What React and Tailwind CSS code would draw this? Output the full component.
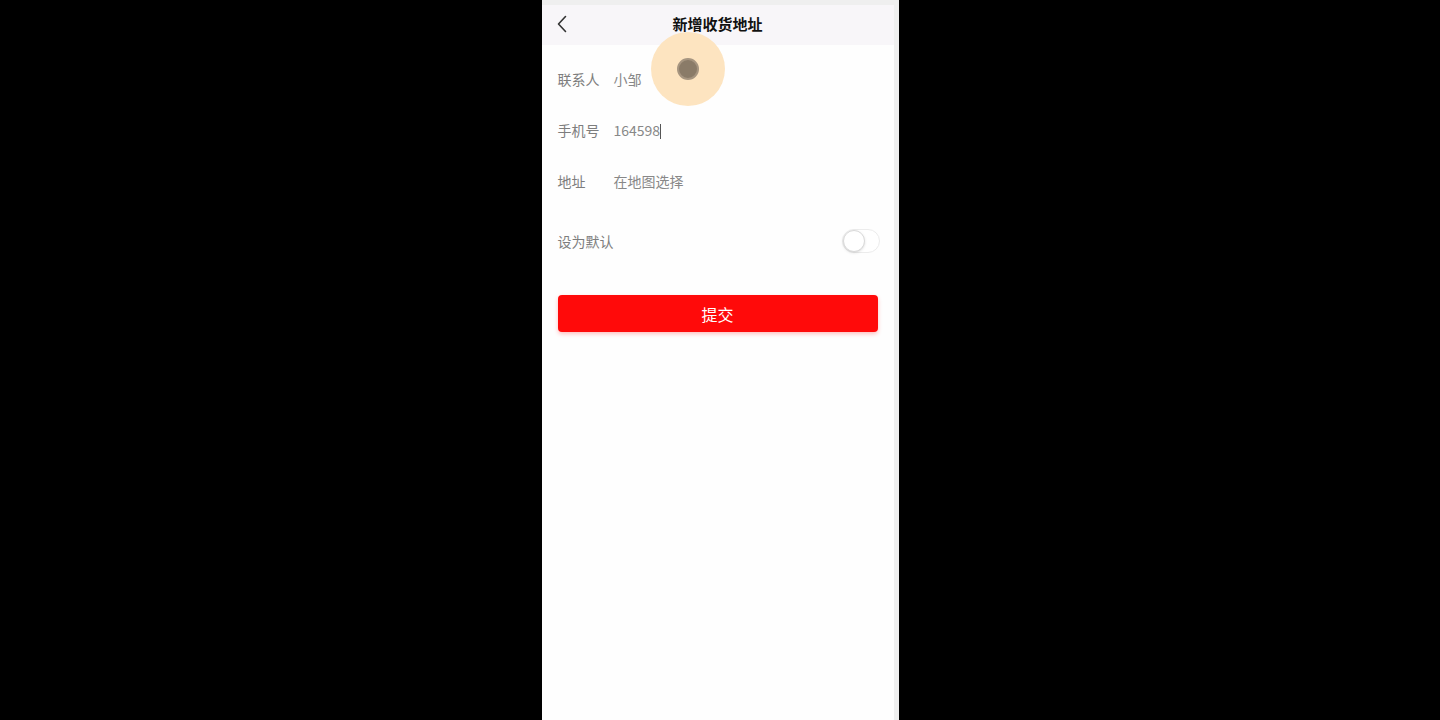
import React from 'react';

const font = { fontFamily: '"Noto Sans CJK SC", "Liberation Sans", sans-serif' };

function Row({ label, children, className = '' }) {
  return (
    <div className={`flex items-center px-4 text-[14px] ${className}`}>
      <span className="w-[56px] text-[#7d7d7d]">{label}</span>
      <div className="flex-1 text-[#888888]">{children}</div>
    </div>
  );
}

export default function App() {
  return (
    <div className="h-[720px] w-full bg-black flex justify-center" style={font}>
      <div className="relative h-full w-[357px] bg-[#efefef] pt-[5px] pr-[5px]">
        <div className="h-full bg-[#fefefe] flex flex-col">
          {/* Cabecera */}
          <div className="relative h-[40px] bg-[#f8f6f9] flex items-center justify-center">
            <svg className="absolute left-[14px] top-[10px]" width="12" height="18" viewBox="0 0 12 18" fill="none">
              <path d="M9.5 1.5 L2.5 9 L9.5 16.5" stroke="#333" strokeWidth="1.6" strokeLinecap="round" strokeLinejoin="round" />
            </svg>
            <h1 className="text-[15px] font-bold text-[#111] leading-none -mt-[3px]">新增收货地址</h1>
          </div>

          {/* Formulario */}
          <div className="flex flex-col">
            <Row label="联系人" className="h-[51px] mt-[9px]">小邹</Row>
            <Row label="手机号" className="h-[51px]">
              <span>164598</span>
              <span className="inline-block w-px h-[15px] bg-[#555] align-middle -mt-[2px]" />
            </Row>
            <Row label="地址" className="h-[51px]">在地图选择</Row>
            <div className="flex items-center justify-between px-4 h-[50px] mt-[9px] text-[14px]">
              <span className="text-[#7d7d7d]">设为默认</span>
              <div className="relative w-[38px] h-[24px] rounded-full border border-[#ececec] bg-white -mr-[2px]">
                <div className="absolute left-0 top-0 w-[22px] h-[22px] rounded-full bg-white border border-[#d9d9d9] shadow-sm" />
              </div>
            </div>
          </div>

          <div className="px-4 mt-[29px]">
            <button className="w-full h-[37px] rounded-[4px] bg-[#ff0a0a] text-white text-[16px] shadow-[0_2px_4px_rgba(255,0,0,0.25)]">
              提交
            </button>
          </div>
        </div>

        {/* Indicador de toque */}
        <div className="absolute left-[109px] top-[32px] w-[74px] h-[74px] rounded-full bg-[#fde3bd]/95 flex items-center justify-center">
          <div className="w-[22px] h-[22px] rounded-full bg-[#8a7b68] border-2 border-[#a69580]" />
        </div>
      </div>
    </div>
  );
}
